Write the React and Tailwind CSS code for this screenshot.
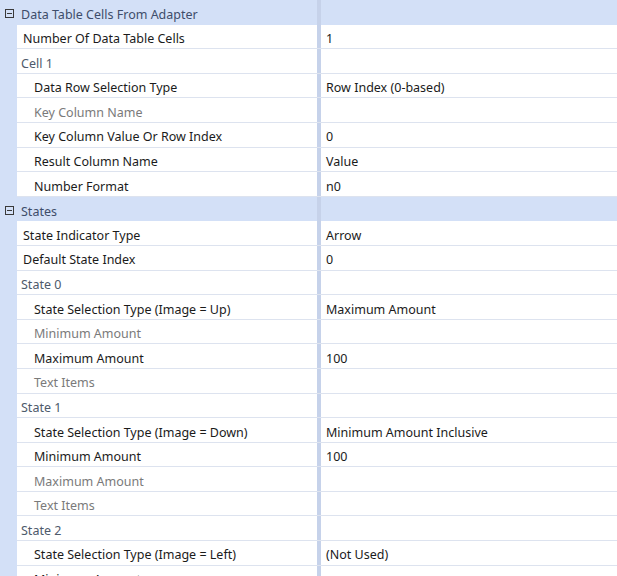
import React from "react";

const rows = [
  { type: "header", label: "Data Table Cells From Adapter" },
  { type: "prop", label: "Number Of Data Table Cells", value: "1", depth: 1 },
  { type: "cat", label: "Cell 1" },
  { type: "prop", label: "Data Row Selection Type", value: "Row Index (0-based)", depth: 2 },
  { type: "prop", label: "Key Column Name", value: "", depth: 2, disabled: true },
  { type: "prop", label: "Key Column Value Or Row Index", value: "0", depth: 2 },
  { type: "prop", label: "Result Column Name", value: "Value", depth: 2 },
  { type: "prop", label: "Number Format", value: "n0", depth: 2 },
  { type: "header", label: "States" },
  { type: "prop", label: "State Indicator Type", value: "Arrow", depth: 1 },
  { type: "prop", label: "Default State Index", value: "0", depth: 1 },
  { type: "cat", label: "State 0" },
  { type: "prop", label: "State Selection Type (Image = Up)", value: "Maximum Amount", depth: 2 },
  { type: "prop", label: "Minimum Amount", value: "", depth: 2, disabled: true },
  { type: "prop", label: "Maximum Amount", value: "100", depth: 2 },
  { type: "prop", label: "Text Items", value: "", depth: 2, disabled: true },
  { type: "cat", label: "State 1" },
  { type: "prop", label: "State Selection Type (Image = Down)", value: "Minimum Amount Inclusive", depth: 2 },
  { type: "prop", label: "Minimum Amount", value: "100", depth: 2 },
  { type: "prop", label: "Maximum Amount", value: "", depth: 2, disabled: true },
  { type: "prop", label: "Text Items", value: "", depth: 2, disabled: true },
  { type: "cat", label: "State 2" },
  { type: "prop", label: "State Selection Type (Image = Left)", value: "(Not Used)", depth: 2 },
  { type: "prop", label: "Minimum Amount", value: "", depth: 2 },
];

// collapse box drawn in the gutter of group headers
const MinusBox = () => (
  <svg width="9" height="9" viewBox="0 0 9 9" className="shrink-0">
    <rect x="0.5" y="0.5" width="8" height="8" fill="none" stroke="#3a3a3a" />
    <line x1="2" y1="4.5" x2="7" y2="4.5" stroke="#3a3a3a" />
  </svg>
);

const Row = ({ row }) => {
  if (row.type === "header") {
    return (
      <div className="flex h-[24.6px] bg-[#d3e0f7]">
        <div className="w-[17px] shrink-0 flex items-center pl-[5px] pt-[3px]">
          <MinusBox />
        </div>
        <div className="w-[300px] shrink-0 flex items-center pl-[4px] pt-[6px] text-[#3e4d6a]">
          {row.label}
        </div>
        <div className="w-[4px] shrink-0 bg-[#c6d2ea]" />
        <div className="flex-1" />
      </div>
    );
  }

  const isCat = row.type === "cat";
  const labelColor = isCat
    ? "text-[#4e5a6b]"
    : row.disabled
    ? "text-[#7a7a7a]"
    : "text-[#1b1b1b]";
  const indent = isCat ? "pl-[4px]" : row.depth === 1 ? "pl-[6px]" : "pl-[17px]";

  return (
    <div className="flex h-[24.6px]">
      <div className="w-[17px] shrink-0 bg-[#d3e0f7]" />
      <div className="flex flex-1 border-b border-[#dde3ef]">
        <div className={`w-[300px] shrink-0 flex items-center pt-[6px] ${indent} ${labelColor} whitespace-nowrap overflow-hidden`}>
          {row.label}
        </div>
        <div className="w-[4px] shrink-0 bg-[#c6d2ea]" />
        <div className="flex-1 flex items-center pt-[6px] pl-[5px] text-[#1b1b1b] whitespace-nowrap">
          {row.value}
        </div>
      </div>
    </div>
  );
};

export default function App() {
  return (
    <div
      className="w-[617px] h-[576px] overflow-hidden bg-white text-[12.5px]"
      style={{ fontFamily: '"Noto Sans", "Open Sans", sans-serif' }}
    >
      {rows.map((row, i) => (
        <Row key={i} row={row} />
      ))}
    </div>
  );
}
